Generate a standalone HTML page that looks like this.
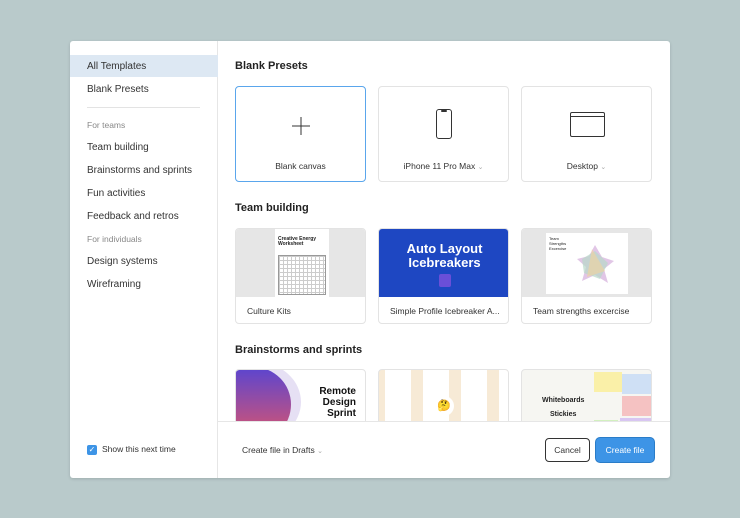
<!DOCTYPE html>
<html><head><meta charset="utf-8"><style>
*{box-sizing:border-box;margin:0;padding:0}
body{width:740px;height:518px;background:#b9cacb;font-family:"Liberation Sans",sans-serif;position:relative;overflow:hidden;color:#333}
.modal{position:absolute;left:70px;top:41px;width:600px;height:437px;background:#fff;border-radius:3px;overflow:hidden;box-shadow:0 1px 3px rgba(0,0,0,.15)}
.side{position:absolute;left:0;top:0;width:148px;height:437px;border-right:1px solid #e6e6e6}
.si{position:absolute;left:17px;font-size:10px;color:#333}
.sh{position:absolute;left:17px;font-size:8.5px;color:#888}
.sel{position:absolute;left:0;top:14px;width:148px;height:22px;background:#dde8f3}
.main{position:absolute;left:148px;top:0;width:452px;height:380px;overflow:hidden}
h2{position:absolute;left:17px;font-size:11px;font-weight:bold;color:#222;top:0}
.card{position:absolute;width:131px;border:1px solid #e3e3e3;border-radius:4px;overflow:hidden;background:#fff}
.lbl{position:absolute;font-size:8.5px;color:#333}
.foot{position:absolute;left:148px;top:380px;width:452px;height:57px;border-top:1px solid #e6e6e6}
.th{position:absolute;left:0;top:0;width:131px;height:68px}
</style></head><body>
<div class="modal">
 <div class="side">
  <div class="sel"></div>
  <div class="si" style="top:20px">All Templates</div>
  <div class="si" style="top:43px">Blank Presets</div>
  <div style="position:absolute;left:17px;top:66px;width:113px;height:1px;background:#e3e3e3"></div>
  <div class="sh" style="top:79px">For teams</div>
  <div class="si" style="top:101px">Team building</div>
  <div class="si" style="top:124px">Brainstorms and sprints</div>
  <div class="si" style="top:147px">Fun activities</div>
  <div class="si" style="top:170px">Feedback and retros</div>
  <div class="sh" style="top:193px">For individuals</div>
  <div class="si" style="top:215px">Design systems</div>
  <div class="si" style="top:238px">Wireframing</div>
  <div style="position:absolute;left:17px;top:404px;width:10px;height:10px;background:#3d94e6;border-radius:2px;color:#fff;font-size:8px;line-height:10px;text-align:center">✓</div>
  <div class="si" style="top:403px;left:32px;font-size:8.5px">Show this next time</div>
 </div>
 <div class="main">
  <h2 style="top:19px">Blank Presets</h2>
  <div class="card" style="left:17px;top:45px;height:96px;border:1.5px solid #5aa6ec">
   <svg style="position:absolute;left:56px;top:30px" width="18" height="18"><path d="M9 0V18M0 9H18" stroke="#333" stroke-width="1"/></svg>
   <div class="lbl" style="left:0;width:100%;text-align:center;top:74px">Blank canvas</div></div>
  <div class="card" style="left:160px;top:45px;height:96px">
   <div style="position:absolute;left:57px;top:22px;width:16px;height:30px;border:1.2px solid #333;border-radius:3px"></div>
   <div style="position:absolute;left:62px;top:23px;width:6px;height:2px;background:#333;border-radius:1px"></div>
   <div class="lbl" style="left:0;width:100%;text-align:center;top:74px">iPhone 11 Pro Max <span style="color:#aaa;font-size:7px">⌄</span></div></div>
  <div class="card" style="left:303px;top:45px;height:96px">
   <div style="position:absolute;left:48px;top:25px;width:35px;height:25px;border:1.2px solid #333;border-radius:2px"></div>
   <div style="position:absolute;left:49px;top:29px;width:33px;height:1px;background:#333"></div>
   <div class="lbl" style="left:0;width:100%;text-align:center;top:74px">Desktop <span style="color:#aaa;font-size:7px">⌄</span></div></div>

  <h2 style="top:161px">Team building</h2>
  <div class="card" style="left:17px;top:187px;height:96px">
   <div class="th" style="background:#e6e6e6"><div style="position:absolute;left:39px;top:0;width:54px;height:68px;background:#fff">
    <div style="position:absolute;left:3px;top:8px;font-size:5px;font-weight:bold;color:#222;line-height:5px">Creative Energy<br>Worksheet</div>
    <div style="position:absolute;left:3px;top:26px;width:48px;height:40px;background-image:linear-gradient(#ccc 1px,transparent 1px),linear-gradient(90deg,#ccc 1px,transparent 1px);background-size:4px 4px;border:1px solid #999"></div></div></div>
   <div class="lbl" style="left:11px;top:77px">Culture Kits</div></div>
  <div class="card" style="left:160px;top:187px;height:96px">
   <div class="th" style="background:#1e47c2;color:#fff;text-align:center;font-weight:bold;font-size:13px;line-height:14px;padding-top:13px">Auto Layout<br>Icebreakers
    <div style="margin:4px auto 0;width:12px;height:13px;background:#6a4fd8;border-radius:2px"></div></div>
   <div class="lbl" style="left:11px;top:77px">Simple Profile Icebreaker A...</div></div>
  <div class="card" style="left:303px;top:187px;height:96px">
   <div class="th" style="background:#e6e6e6"><div style="position:absolute;left:24px;top:4px;width:82px;height:61px;background:#fff">
    <div style="position:absolute;left:3px;top:3px;font-size:4px;line-height:5px;color:#222">Team<br>Strengths<br>Excercise</div>
    <svg style="position:absolute;left:26px;top:8px" width="46" height="46"><polygon points="23,4 30,16 42,20 32,28 36,42 23,34 10,40 14,26 5,18 17,15" fill="#d9b8e0" opacity=".8"/><polygon points="23,10 36,22 28,38 12,32 10,18" fill="#b8d9c8" opacity=".7"/><polygon points="20,8 33,30 15,36" fill="#f2d49b" opacity=".6"/></svg></div></div>
   <div class="lbl" style="left:11px;top:77px">Team strengths excercise</div></div>

  <h2 style="top:303px">Brainstorms and sprints</h2>
  <div class="card" style="left:17px;top:328px;height:70px">
   <div style="position:absolute;left:-25px;top:-8px;width:90px;height:80px;border-radius:50%;background:#e6e0f4"></div>
   <div style="position:absolute;left:-20px;top:-3px;width:75px;height:75px;border-radius:50%;background:linear-gradient(180deg,#5a45d0,#e0566a)"></div>
   <div style="position:absolute;left:72px;top:16px;font-size:10px;font-weight:bold;line-height:11px;text-align:right;width:48px;color:#111">Remote<br>Design<br>Sprint</div></div>
  <div class="card" style="left:160px;top:328px;height:70px;background:#f7ead6">
   <div style="position:absolute;left:0;top:0;width:131px;height:70px;background-image:linear-gradient(90deg,transparent 6px,#fff 6px,#fff 32px,transparent 32px);background-size:38px 14px"></div>
   <div style="position:absolute;left:55px;top:26px;width:20px;height:20px;border-radius:50%;background:#fff;text-align:center;font-size:11px;line-height:20px">🤔</div></div>
  <div class="card" style="left:303px;top:328px;height:70px;background:#f6f6f2">
   <div style="position:absolute;left:20px;top:24px;font-size:7px;font-weight:bold;color:#222;line-height:14px;text-align:center">Whiteboards<br>Stickies</div>
   <div style="position:absolute;left:72px;top:2px;width:28px;height:20px;background:#faf0a8"></div>
   <div style="position:absolute;left:100px;top:4px;width:30px;height:20px;background:#cfe0f5"></div>
   <div style="position:absolute;left:100px;top:26px;width:30px;height:20px;background:#f5c2c2"></div>
   <div style="position:absolute;left:98px;top:48px;width:32px;height:22px;background:#d8c6f2"></div>
   <div style="position:absolute;left:72px;top:50px;width:24px;height:20px;background:#d2f0bf"></div></div>
 </div>
 <div class="foot">
  <div style="position:absolute;left:24px;top:23px;font-size:8.5px;color:#333">Create file in Drafts <span style="color:#aaa;font-size:7px">⌄</span></div>
  <div style="position:absolute;left:327px;top:16px;width:45px;height:24px;border:1px solid #333;border-radius:4px;font-size:8.5px;line-height:22px;text-align:center">Cancel</div>
  <div style="position:absolute;left:378px;top:16px;width:58px;height:24px;background:#3d94e6;border-radius:4px;font-size:8.5px;line-height:24px;text-align:center;color:#fff;box-shadow:0 0 0 1px #2a7cc8">Create file</div>
 </div>
</div>
</body></html>
